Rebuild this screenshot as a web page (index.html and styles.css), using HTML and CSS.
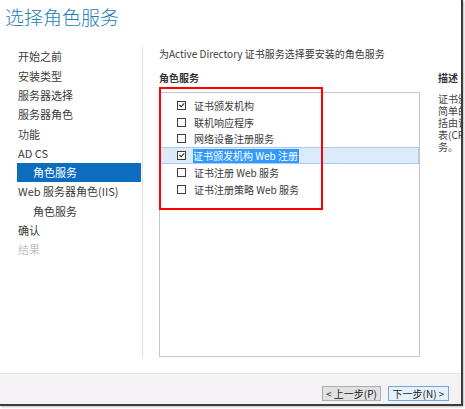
FILE: index.html
```html
<!DOCTYPE html>
<html lang="zh-CN">

<head>
    <meta charset="UTF-8">
    <meta name="viewport" content="width=device-width, initial-scale=1.0">
    <title>添加角色和功能向导</title>
    <link rel="stylesheet" href="styles.css">
</head>

<body>
    <div class="window">
        <h1 class="title">选择角色服务</h1>

        <div class="main">
            <ul class="nav">
                <li>开始之前</li>
                <li>安装类型</li>
                <li>服务器选择</li>
                <li>服务器角色</li>
                <li>功能</li>
                <li>AD CS</li>
                <li class="sub active">角色服务</li>
                <li>Web 服务器角色(IIS)</li>
                <li class="sub">角色服务</li>
                <li>确认</li>
                <li class="disabled">结果</li>
            </ul>

            <div class="content">
                <p class="intro">为Active Directory 证书服务选择要安装的角色服务</p>
                <div class="columns">
                    <div class="roles">
                        <div class="label">角色服务</div>
                        <div class="listbox-wrap">
                            <ul class="listbox">
                                <li class="row"><span class="check on"></span><span>证书颁发机构</span></li>
                                <li class="row"><span class="check"></span><span>联机响应程序</span></li>
                                <li class="row"><span class="check"></span><span>网络设备注册服务</span></li>
                                <li class="row selected"><span class="check on"></span><span class="sel-text">证书颁发机构 Web 注册</span></li>
                                <li class="row"><span class="check"></span><span>证书注册 Web 服务</span></li>
                                <li class="row"><span class="check"></span><span>证书注册策略 Web 服务</span></li>
                            </ul>
                            <!-- annotation drawn over the list -->
                            <div class="highlight-box"></div>
                        </div>
                    </div>
                    <div class="desc">
                        <div class="label">描述</div>
                        <p class="desc-text">证书颁<br>简单的<br>括由证<br>表(CR<br>务。</p>
                    </div>
                </div>
            </div>
        </div>

        <div class="footer">
            <button type="button" class="btn">&lt; 上一步(P)</button>
            <button type="button" class="btn default">下一步(N) &gt;</button>
        </div>
    </div>
</body>

</html>
```

FILE: styles.css
```css
body {
    margin: 0;
    width: 465px;
    height: 409px;
    overflow: hidden;
    background-color: #ffffff;
    font-family: "Noto Sans CJK SC", "Liberation Sans", sans-serif;
    color: #3a3a3a;
}

.window {
    width: 461px;
    height: 404px;
    background-color: #ffffff;
    border-right: 2px solid #3b3b3b;
    border-bottom: 2px solid #3b3b3b;
    box-shadow: 1px 1px 2px rgba(0, 0, 0, 0.25);
    display: flex;
    flex-direction: column;
    overflow: hidden;
}

.title {
    height: 46px;
    margin: 0;
    padding: 4px 0 0 5px;
    box-sizing: border-box;
    font-size: 19px;
    font-weight: 300;
    line-height: 26px;
    color: #1f80b3;
}

.main {
    height: 312px;
    display: flex;
}

/* left navigation */
.nav {
    flex: 0 0 142px;
    margin: 0;
    padding: 1.4px 0 0 0;
    list-style: none;
    border-right: 1px solid #e2e2e2;
    font-size: 11px;
}

.nav li {
    margin-left: 17px;
    margin-right: 1px;
    padding-left: 1px;
    height: 19.3px;
    line-height: 19.3px;
    white-space: nowrap;
}

.nav li.sub {
    padding-left: 16px;
}

.nav li.active {
    background-color: #0c6dbf;
    color: #ffffff;
}

.nav li.disabled {
    color: #c2c2c2;
}

/* right pane */
.content {
    flex: 1;
    min-width: 0;
    padding-left: 16px;
    font-size: 10px;
}

.intro {
    margin: 1px 0 0 0;
    line-height: 14px;
    white-space: nowrap;
}

.columns {
    display: flex;
    margin-top: 10px;
}

.label {
    font-weight: bold;
    line-height: 14px;
    color: #333;
}

.roles {
    flex: 0 0 261px;
}

.listbox-wrap {
    position: relative;
    margin-top: 7px;
}

.listbox {
    margin: 0;
    padding: 4px 0 0 0;
    list-style: none;
    height: 265px;
    box-sizing: border-box;
    border: 1px solid #c6c6c6;
}

.row {
    height: 16.8px;
    box-sizing: border-box;
    display: flex;
    align-items: center;
    padding-left: 17px;
    white-space: nowrap;
}

.row.selected {
    background-color: #dcebfc;
    border: 1px solid #a8cbf1;
    padding-left: 16px;
}

.check {
    width: 9px;
    height: 9px;
    box-sizing: border-box;
    border: 1px solid #3c3c3c;
    background-color: #ffffff;
    margin-right: 8px;
    position: relative;
}

.check.on::after {
    content: "";
    position: absolute;
    left: 1px;
    top: 0px;
    width: 4px;
    height: 2px;
    border-left: 1.4px solid #1a1a1a;
    border-bottom: 1.4px solid #1a1a1a;
    transform: translate(0.3px, 1px) rotate(-48deg);
    transform-origin: center;
}

.sel-text {
    background-color: #3399ff;
    color: #ffffff;
    line-height: 14px;
    padding: 0 1px 0 0;
    margin-left: -1px;
}

.highlight-box {
    position: absolute;
    top: -5px;
    left: 0;
    width: 164px;
    height: 123px;
    box-sizing: border-box;
    border: 2px solid #ff0000;
}

.desc {
    flex: 1;
    min-width: 0;
    margin-left: 18px;
    overflow: hidden;
    white-space: nowrap;
}

.desc-text {
    margin: 8px 0 0 0;
    line-height: 12px;
    color: #444;
}

/* bottom button bar */
.footer {
    margin-top: 15px;
    height: 31px;
    box-sizing: border-box;
    border-top: 1px solid #e9e5e9;
    background-color: #f5f2f5;
    display: flex;
    justify-content: flex-end;
    align-items: flex-start;
    gap: 7px;
    padding: 12px 12px 0 0;
}

.btn {
    width: 59px;
    height: 15px;
    padding: 0;
    font-family: "Noto Sans CJK SC", "Liberation Sans", sans-serif;
    font-size: 10px;
    line-height: 13px;
    color: #222;
    background-color: #e1e1e1;
    border: 1px solid #adadad;
}

.btn.default {
    width: 61px;
    background-color: #e5f1fb;
    border-color: #6ea8df;
}
```
